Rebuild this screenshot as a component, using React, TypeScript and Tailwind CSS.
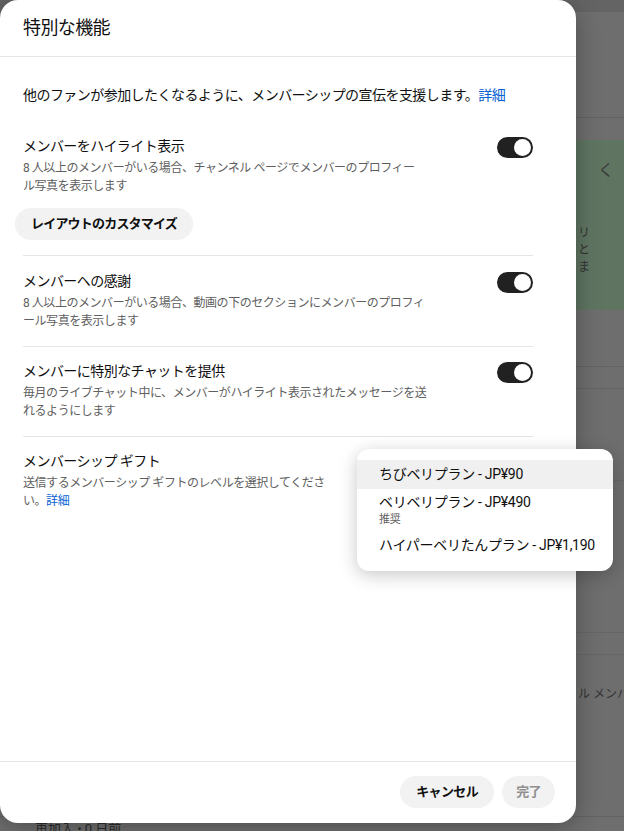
import React from "react";

function Toggle() {
  return (
    <div className="w-[36px] h-[21px] rounded-full bg-[#212121] flex items-center justify-end px-[2px] shrink-0 mt-[1px]">
      <div className="w-[17px] h-[17px] rounded-full bg-white" />
    </div>
  );
}

function Section({
  title,
  lines,
  children,
  toggle = true,
  className = "",
}: {
  title: string;
  lines: React.ReactNode[];
  children?: React.ReactNode;
  toggle?: boolean;
  className?: string;
}) {
  return (
    <div className={className}>
      <div className="flex items-start justify-between">
        <div>
          <div className="text-[14px] leading-[20px] tracking-[-0.55px] text-[#0f0f0f]">{title}</div>
          <div className="mt-[3px] text-[12px] leading-[18px] tracking-[-0.45px] text-[#606060]">
            {lines.map((l, i) => (
              <div key={i}>{l}</div>
            ))}
          </div>
        </div>
        {toggle && <Toggle />}
      </div>
      {children}
    </div>
  );
}

export default function App() {
  return (
    <div className="relative w-[624px] h-[831px] overflow-hidden bg-[#6e6e6e] font-['Roboto','Noto_Sans_CJK_JP',sans-serif]">
      {/* background page (dimmed) */}
      <div className="flex flex-col w-full h-full">
        <div className="h-[12px] shrink-0 bg-[#646464]" />
        <div className="h-[106px] shrink-0 border-b border-[#626262]" />
        <div className="h-[22px] shrink-0" />
        <div className="h-[170px] shrink-0 bg-[#5f7562] pl-[578px] text-[#333333] text-[12px] leading-[17px]">
          <div className="mt-[22px] flex items-center gap-[10px] pl-[20px] text-[16px] text-[#3a3a3a]">
            <span>く</span>
            <span className="text-[13px]">1</span>
          </div>
          <div className="mt-[46px]">リ</div>
          <div>と</div>
          <div>ま</div>
        </div>
        <div className="h-[57px] shrink-0 border-b border-[#636363]" />
        <div className="h-[22px] shrink-0 border-b border-[#636363]" />
        <div className="h-[92px] shrink-0 border-b border-[#666666]" />
        <div className="h-[152px] shrink-0 border-b border-[#666666]" />
        <div className="h-[22px] shrink-0 border-b border-[#666666]" />
        <div className="h-[60px] shrink-0 pl-[578px] pt-[30px] text-[12px] text-[#333333] whitespace-nowrap">ル メンバ</div>
        <div className="h-[102px] shrink-0 border-b border-[#636363]" />
        <div className="pl-[35px] pt-[2px] text-[13px] text-[#2c2c2c] whitespace-nowrap">再加入 • 0 日前</div>
      </div>

      {/* modal */}
      <div className="absolute left-0 top-0 w-[576px] h-[823px] bg-white rounded-[18px] shadow-[0_4px_24px_rgba(0,0,0,0.3)] flex flex-col">
        <div className="h-[57px] shrink-0 border-b border-[#e5e5e5] px-[23px] flex items-center pb-[1px]">
          <h1 className="text-[18px] leading-[24px] tracking-[-0.6px] text-[#0f0f0f] font-normal">特別な機能</h1>
        </div>

        <div className="flex-1 pl-[23px] pr-[43px]">
          <p className="pt-[28px] text-[14px] leading-[20px] tracking-[-0.55px] text-[#0f0f0f] whitespace-nowrap">
            他のファンが参加したくなるように、メンバーシップの宣伝を支援します。
            <span className="text-[#065fd4]">詳細</span>
          </p>

          <Section
            className="pt-[31px] pb-[15px] border-b border-[#e5e5e5]"
            title="メンバーをハイライト表示"
            lines={[
              "8 人以上のメンバーがいる場合、チャンネル ページでメンバーのプロフィー",
              "ル写真を表示します",
            ]}
          >
            <button className="mt-[13px] -ml-[8px] h-[32px] px-[16px] rounded-full bg-[#f2f2f2] text-[13px] tracking-[-0.8px] font-bold text-[#0f0f0f]">
              レイアウトのカスタマイズ
            </button>
          </Section>

          <Section
            className="pt-[15px] pb-[16px] border-b border-[#e5e5e5]"
            title="メンバーへの感謝"
            lines={[
              "8 人以上のメンバーがいる場合、動画の下のセクションにメンバーのプロフィ",
              "ール写真を表示します",
            ]}
          />

          <Section
            className="pt-[14px] pb-[16px] border-b border-[#e5e5e5]"
            title="メンバーに特別なチャットを提供"
            lines={[
              "毎月のライブチャット中に、メンバーがハイライト表示されたメッセージを送",
              "れるようにします",
            ]}
          />

          <Section
            className="pt-[14px]"
            toggle={false}
            title="メンバーシップ ギフト"
            lines={[
              "送信するメンバーシップ ギフトのレベルを選択してくださ",
              <span>
                い。<span className="text-[#065fd4]">詳細</span>
              </span>,
            ]}
          />
        </div>

        <div className="shrink-0 border-t border-[#e5e5e5] pt-[14px] pb-[15px] pr-[21px] flex justify-end gap-[8px]">
          <button className="h-[32px] px-[16px] rounded-full bg-[#f2f2f2] text-[13px] tracking-[-0.6px] font-bold text-[#0f0f0f]">
            キャンセル
          </button>
          <button className="h-[32px] px-[14px] rounded-full bg-[#f2f2f2] text-[13px] tracking-[-0.6px] font-bold text-[#909090]">
            完了
          </button>
        </div>
      </div>

      {/* dropdown menu */}
      <div className="absolute left-[357px] top-[449px] w-[256px] py-[11px] bg-white rounded-[12px] shadow-[0_4px_18px_rgba(0,0,0,0.22)] text-[#0f0f0f] tracking-[-0.3px]">
        <div className="h-[29px] bg-[#f0f0f0] px-[22px] flex items-center text-[14px]">ちびベリプラン - JP¥90</div>
        <div className="px-[22px] pt-[4px] pb-[4px]">
          <div className="text-[14px] leading-[18px]">ベリベリプラン - JP¥490</div>
          <div className="text-[11px] leading-[14px] mt-[2px] text-[#606060]">推奨</div>
        </div>
        <div className="h-[29px] px-[22px] flex items-center text-[14px] whitespace-nowrap">ハイパーベリたんプラン - JP¥1,190</div>
      </div>
    </div>
  );
}
